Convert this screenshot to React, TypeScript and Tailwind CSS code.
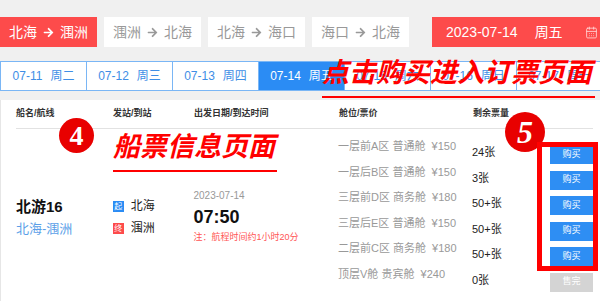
import React from "react";
import { FaArrowRight } from "react-icons/fa";
import { CalendarDays } from "lucide-react";

const routes = [
  { from: "北海", to: "涠洲", active: true },
  { from: "涠洲", to: "北海", active: false },
  { from: "北海", to: "海口", active: false },
  { from: "海口", to: "北海", active: false },
];

const days = [
  { date: "07-11", week: "周二" },
  { date: "07-12", week: "周三" },
  { date: "07-13", week: "周四" },
  { date: "07-14", week: "周五", active: true },
  { date: "07-15", week: "周六" },
  { date: "07-16", week: "周日" },
  { date: "07-17", week: "周一" },
];

const cabins = [
  { name: "一层前A区 普通舱", price: 150, left: "24张" },
  { name: "一层后B区 普通舱", price: 150, left: "3张" },
  { name: "三层前D区 商务舱", price: 180, left: "50+张" },
  { name: "三层后E区 普通舱", price: 150, left: "50+张" },
  { name: "二层前C区 商务舱", price: 180, left: "50+张" },
  { name: "顶层V舱 贵宾舱", price: 240, left: "0张", soldOut: true },
];

export default function App() {
  return (
    <div className="relative w-[600px] h-[301px] overflow-hidden bg-[#f0f0f0] font-['Liberation_Sans','Noto_Sans_CJK_SC',sans-serif] flex flex-col">
      {/* route tabs + date picker */}
      <div className="flex items-center pt-[17px] h-[47px] shrink-0">
        <div className="flex gap-[7px]">
          {routes.map((r) => (
            <div
              key={r.from + r.to}
              className={`w-[97px] h-[30px] flex items-center justify-center gap-[6px] text-[14px] ${
                r.active ? "bg-[#fd4b4b] text-white" : "bg-white text-[#999]"
              }`}
            >
              <span>{r.from}</span>
              <FaArrowRight className="w-[11px] h-[11px]" />
              <span>{r.to}</span>
            </div>
          ))}
        </div>
        <div className="ml-[23px] flex-1 h-[30px] bg-[#fd4b4b] text-white text-[14px] flex items-center pl-[14px]">
          <span>2023-07-14</span>
          <span className="ml-[17px]">周五</span>
          <CalendarDays className="ml-[22px] w-[13px] h-[13px] shrink-0 text-[#ffd6d6]" strokeWidth={1.6} />
        </div>
      </div>

      {/* day tabs */}
      <div className="flex mt-[14px] h-[30px] shrink-0">
        {days.map((d) => (
          <div
            key={d.date}
            className={`w-[87px] shrink-0 flex items-center justify-center gap-[8px] text-[12px] border border-[#7ab6f5] -ml-px first:ml-0 ${
              d.active ? "bg-[#2b8cf4] text-white border-[#2b8cf4]" : "bg-white text-[#3e8ee6]"
            }`}
          >
            <span>{d.date}</span>
            <span>{d.week}</span>
          </div>
        ))}
      </div>

      {/* ticket panel */}
      <div className="mt-[9px] flex-1 bg-white border-l border-[#e6e6e6] pl-[15px] pr-[7px]">
        <div className="flex h-[29px] items-end pb-[8px] border-b border-[#e2e2e2] text-[9px] font-bold text-[#333]">
          <div className="w-[97px]">船名/航线</div>
          <div className="w-[81px]">发站/到站</div>
          <div className="w-[145px]">出发日期/到达时间</div>
          <div className="w-[134px]">舱位/票价</div>
          <div>剩余票量</div>
        </div>

        <div className="flex pt-[4px]">
          <div className="w-[97px] pt-[65px]">
            <div className="text-[15px] leading-[18px] font-bold text-[#111]">北游16</div>
            <div className="mt-[4px] text-[13px] leading-[18px] text-[#5c9fe8]">北海-涠洲</div>
          </div>

          <div className="w-[81px] pt-[64px] text-[12px] text-[#222]">
            <div className="flex items-center gap-[7px] h-[18px]">
              <span className="w-[11px] h-[11px] bg-[#2b8cf4] text-white text-[8px] leading-[11px] text-center">起</span>
              <span>北海</span>
            </div>
            <div className="flex items-center gap-[7px] h-[18px] mt-[4px]">
              <span className="w-[11px] h-[11px] bg-[#fd4b4b] text-white text-[8px] leading-[11px] text-center">终</span>
              <span>涠洲</span>
            </div>
          </div>

          <div className="w-[145px] pt-[57px]">
            <div className="text-[10px] leading-[12px] text-[#999]">2023-07-14</div>
            <div className="mt-[3px] text-[18px] leading-[24px] font-bold text-[#111]">07:50</div>
            <div className="mt-[2px] text-[9px] leading-[12px] text-[#f55]">注：航程时间约1小时20分</div>
          </div>

          <div className="flex-1">
            {cabins.map((c) => (
              <div key={c.name} className="flex h-[25.5px] items-start">
                <div className="w-[134px] mt-[7px] text-[11px] leading-[12px] text-[#999] whitespace-nowrap">
                  {c.name}&nbsp;&nbsp;¥{c.price}
                </div>
                <div className="w-[78px] mt-[13px] text-[11px] leading-[12px] text-[#222]">{c.left}</div>
                <div
                  className={`mt-[12px] w-[43px] h-[19px] flex items-center justify-center text-[9px] text-white ${
                    c.soldOut ? "bg-[#d4d4d4]" : "bg-[#2e8ef3]"
                  }`}
                >
                  {c.soldOut ? "售完" : "购买"}
                </div>
              </div>
            ))}
          </div>
        </div>
      </div>

      {/* annotations */}
      <div className="absolute left-[322px] top-[56px] w-[273px] border-b-2 border-[#f00] pb-[6px]">
        <div className="text-[27px] leading-[34px] font-bold italic text-[#f00] whitespace-nowrap">
          点击购买进入订票页面
        </div>
      </div>
      <div className="absolute left-[113px] top-[130px] w-[164px] border-b-2 border-[#f00] pb-[6px]">
        <div className="text-[27px] leading-[34px] font-bold italic text-[#f00] whitespace-nowrap">船票信息页面</div>
      </div>
      <div className="absolute left-[59px] top-[118px] w-[35px] h-[35px] rounded-full bg-[#e80000] flex items-center justify-center text-white text-[28px] font-bold font-['Liberation_Serif',serif]">
        4
      </div>
      <div className="absolute left-[505px] top-[112px] w-[40px] h-[40px] rounded-full bg-[#e80000] flex items-center justify-center text-white text-[32px] font-bold italic font-['Liberation_Serif',serif]">
        5
      </div>
      <div className="absolute left-[537px] top-[142px] w-[61px] h-[129px] border-[5px] border-[#f00]" />
    </div>
  );
}
